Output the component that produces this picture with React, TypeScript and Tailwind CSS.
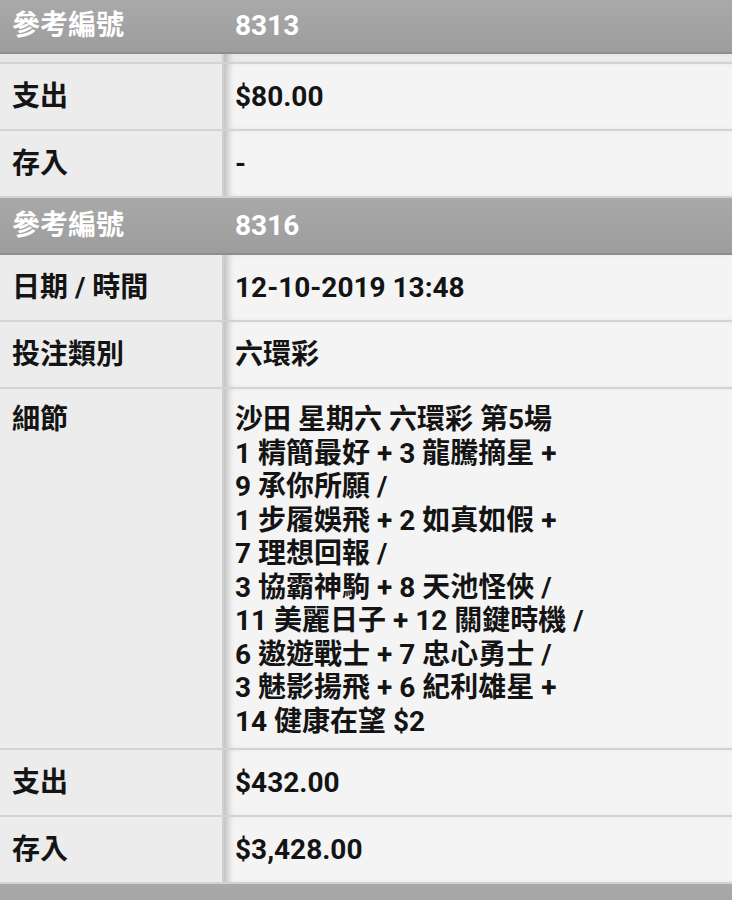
import React from 'react';

type Row = { label: string; value: React.ReactNode };

const FONT = "font-['Roboto','Noto_Sans_CJK_TC',sans-serif]";

const HeaderRow: React.FC<{ refNo?: string; h: string }> = ({ refNo, h }) => (
  <div
    className={`flex items-center overflow-hidden bg-gradient-to-b from-[#a9a9a9] to-[#9d9d9d] border-b-2 border-[#8d8d8d] text-white ${h}`}
  >
    {refNo && (
      <>
        <div className="w-[223px] pl-3 text-[28px] font-bold leading-none">參考編號</div>
        <div className="pl-3 text-[28px] font-bold leading-none">{refNo}</div>
      </>
    )}
  </div>
);

const DataRow: React.FC<Row & { tall?: boolean }> = ({ label, value, tall }) => (
  <div className="flex border-b-2 border-[#d3d3d3]">
    <div className={`w-[222px] shrink-0 bg-[#ececec] pl-3 ${tall ? 'pt-[14px]' : 'flex items-center h-[65px]'}`}>
      <span className="text-[28px] font-bold leading-[33.5px] text-[#141414]">{label}</span>
    </div>
    <div className="w-[2px] shrink-0 bg-[#cfcfcf]" />
    <div
      className={`flex-1 bg-[#f4f4f4] pl-[11px] shadow-[inset_8px_0_7px_-4px_rgba(0,0,0,0.22)] ${
        tall ? 'pt-[14px] pb-[10px]' : 'flex items-center h-[65px]'
      }`}
    >
      <div className="text-[28px] font-bold leading-[33.5px] text-[#141414]">{value}</div>
    </div>
  </div>
);

const Spacer: React.FC = () => (
  <div className="flex h-[10px] border-b-2 border-[#d3d3d3]">
    <div className="w-[222px] bg-[#e6e6e6]" />
    <div className="w-[2px] bg-[#cfcfcf]" />
    <div className="flex-1 bg-[#ececec] shadow-[inset_8px_0_7px_-4px_rgba(0,0,0,0.22)]" />
  </div>
);

const details = [
  '沙田 星期六 六環彩 第5場',
  '1 精簡最好 + 3 龍騰摘星 +',
  '9 承你所願 /',
  '1 步履娛飛 + 2 如真如假 +',
  '7 理想回報 /',
  '3 協霸神駒 + 8 天池怪俠 /',
  '11 美麗日子 + 12 關鍵時機 /',
  '6 遨遊戰士 + 7 忠心勇士 /',
  '3 魅影揚飛 + 6 紀利雄星 +',
  '14 健康在望 $2',
];

export default function App() {
  return (
    <div className={`w-[732px] h-[900px] overflow-hidden bg-[#ececec] ${FONT}`}>
      <HeaderRow refNo="8313" h="h-[54px]" />
      <Spacer />
      <DataRow label="支出" value="$80.00" />
      <DataRow label="存入" value="-" />
      <HeaderRow refNo="8316" h="h-[57px]" />
      <DataRow label="日期 / 時間" value="12-10-2019 13:48" />
      <DataRow label="投注類別" value="六環彩" />
      <DataRow
        label="細節"
        tall
        value={
          <>
            {details.map((line, i) => (
              <div key={i}>{line}</div>
            ))}
          </>
        }
      />
      <DataRow label="支出" value="$432.00" />
      <DataRow label="存入" value="$3,428.00" />
      <HeaderRow h="h-[57px]" />
    </div>
  );
}
